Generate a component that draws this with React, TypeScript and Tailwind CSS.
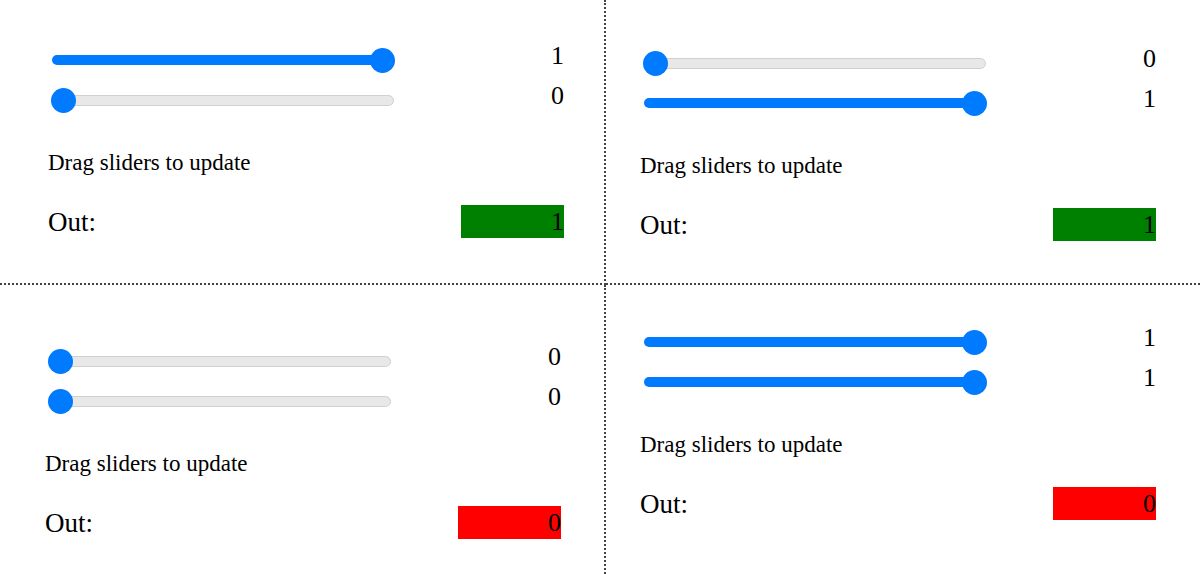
import React from "react";

const serif = { fontFamily: '"Liberation Serif", "Times New Roman", serif' };

function Slider({ on }: { on: boolean }) {
  return (
    <div className="relative flex h-6 w-[342px] items-center">
      <div
        className={
          on
            ? "h-[10px] w-full rounded-full bg-[#007bff]"
            : "h-[11px] w-full rounded-full border border-[#d0d0d0] bg-[#e8e8e8]"
        }
      />
      <div
        className={
          on
            ? "absolute -right-px top-0 h-[25px] w-[25px] rounded-full bg-[#007bff]"
            : "absolute -left-px top-0 h-[25px] w-[25px] rounded-full bg-[#007bff]"
        }
      />
    </div>
  );
}

// output = a XOR b
function Panel({ a, b, pad }: { a: number; b: number; pad: string }) {
  const out = a !== b ? 1 : 0;
  return (
    <div className={pad}>
      <div className="w-[516px] text-black" style={serif}>
        {[a, b].map((v, i) => (
          <div key={i} className="flex h-10 items-center justify-between">
            <div className="ml-1">
              <Slider on={v === 1} />
            </div>
            <span className="pb-2 text-[26px] leading-none">{v}</span>
          </div>
        ))}
        <div className="mt-[29px] text-[23px] leading-7">Drag sliders to update</div>
        <div className="mt-[28px] flex items-center justify-between">
          <span className="text-[27px] leading-8">Out:</span>
          <div
            className={
              out
                ? "flex h-[33px] w-[103px] items-center justify-end bg-[#008000] text-[26px] leading-none"
                : "flex h-[33px] w-[103px] items-center justify-end bg-[#ff0000] text-[26px] leading-none"
            }
          >
            {out}
          </div>
        </div>
      </div>
    </div>
  );
}

export default function App() {
  return (
    <div className="grid h-[574px] w-[1200px] grid-cols-[606px_594px] grid-rows-[285px_289px] overflow-hidden bg-white">
      <div className="border-b-2 border-r-2 border-dotted border-[#444]">
        <Panel a={1} b={0} pad="pl-12 pt-10" />
      </div>
      <div className="border-b-2 border-dotted border-[#444]">
        <Panel a={0} b={1} pad="pl-[34px] pt-[43px]" />
      </div>
      <div className="border-r-2 border-dotted border-[#444]">
        <Panel a={0} b={0} pad="pl-[45px] pt-[56px]" />
      </div>
      <div>
        <Panel a={1} b={1} pad="pl-[34px] pt-[37px]" />
      </div>
    </div>
  );
}
